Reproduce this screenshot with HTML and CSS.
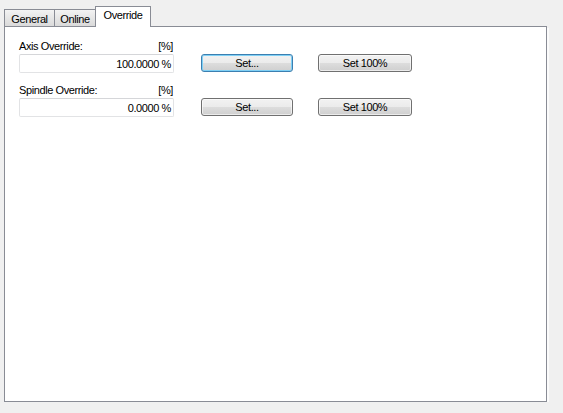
FILE: index.html
```html
<!DOCTYPE html>
<html>
<head>
<meta charset="utf-8">
<link rel="stylesheet" href="styles.css">
</head>
<body>
<div class="window">
  <div class="tabs">
    <div class="tab tab-general">General</div>
    <div class="tab tab-online">Online</div>
    <div class="tab tab-active">Override</div>
  </div>
  <div class="panel">
    <div class="row">
      <div class="field">
        <div class="label"><span>Axis Override:</span><span>[%]</span></div>
        <div class="input">100.0000 %</div>
      </div>
      <button class="btn btn-set focused">Set...</button>
      <button class="btn btn-100">Set 100%</button>
    </div>
    <div class="row">
      <div class="field">
        <div class="label"><span>Spindle Override:</span><span>[%]</span></div>
        <div class="input">0.0000 %</div>
      </div>
      <button class="btn btn-set">Set...</button>
      <button class="btn btn-100">Set 100%</button>
    </div>
  </div>
</div>
</body>
</html>
```

FILE: styles.css
```css
html, body {
  margin: 0;
  padding: 0;
  background: #f0f0f0;
  font-family: "Liberation Sans", Arial, sans-serif;
  font-size: 11px;
  color: #000;
  letter-spacing: -0.4px;
}

.window {
  padding: 6px 0 0 4px;
}

.tabs {
  display: flex;
  align-items: flex-end;
  height: 20px;
}

.tab {
  box-sizing: border-box;
  border: 1px solid #898c95;
  border-bottom: none;
  height: 17px;
  line-height: 16px;
  text-align: center;
  background: linear-gradient(#f3f3f3, #e6e6e6 50%, #dadada);
  padding-top: 1px;
}

.tab-general {
  width: 51px;
}

.tab-online {
  width: 42px;
  margin-left: -1px;
}

.tab-active {
  width: 56px;
  height: 21px;
  margin-left: -1px;
  margin-bottom: -1px;
  background: #fff;
  position: relative;
  z-index: 1;
  line-height: 15px;
  padding-top: 1px;
}

.panel {
  box-sizing: border-box;
  width: 543px;
  height: 376px;
  background: #fff;
  border: 1px solid #898c95;
  box-shadow: 2px 2px 0 #fbfbfb;
  padding: 13px 0 0 14px;
  display: flex;
  flex-direction: column;
  gap: 11px;
}

.row {
  display: flex;
  align-items: flex-end;
}

.field {
  width: 155px;
}

.label {
  display: flex;
  justify-content: space-between;
  height: 14px;
  line-height: 13px;
  padding-right: 1px;
}

.input {
  box-sizing: border-box;
  height: 19px;
  border: 1px solid #e2e3e5;
  border-top-color: #d5d6d9;
  border-radius: 2px;
  text-align: right;
  padding-right: 2px;
  line-height: 18px;
}

.btn {
  box-sizing: border-box;
  height: 18px;
  margin-bottom: 1px;
  font-family: inherit;
  font-size: 11px;
  letter-spacing: -0.4px;
  color: #000;
  border: 1px solid #707070;
  border-radius: 3px;
  background: linear-gradient(#f2f2f2, #ebebeb 50%, #dddddd 50%, #cfcfcf);
  padding: 0;
  line-height: 15px;
  box-shadow: inset 0 0 0 1px rgba(255, 255, 255, 0.6);
}

.btn-set {
  width: 92px;
  margin-left: 27px;
}

.btn-100 {
  width: 94px;
  margin-left: 25px;
}

.btn.focused {
  border-color: #3c7fb1;
  box-shadow: inset 0 0 0 1px #7fd0f5;
}
```
